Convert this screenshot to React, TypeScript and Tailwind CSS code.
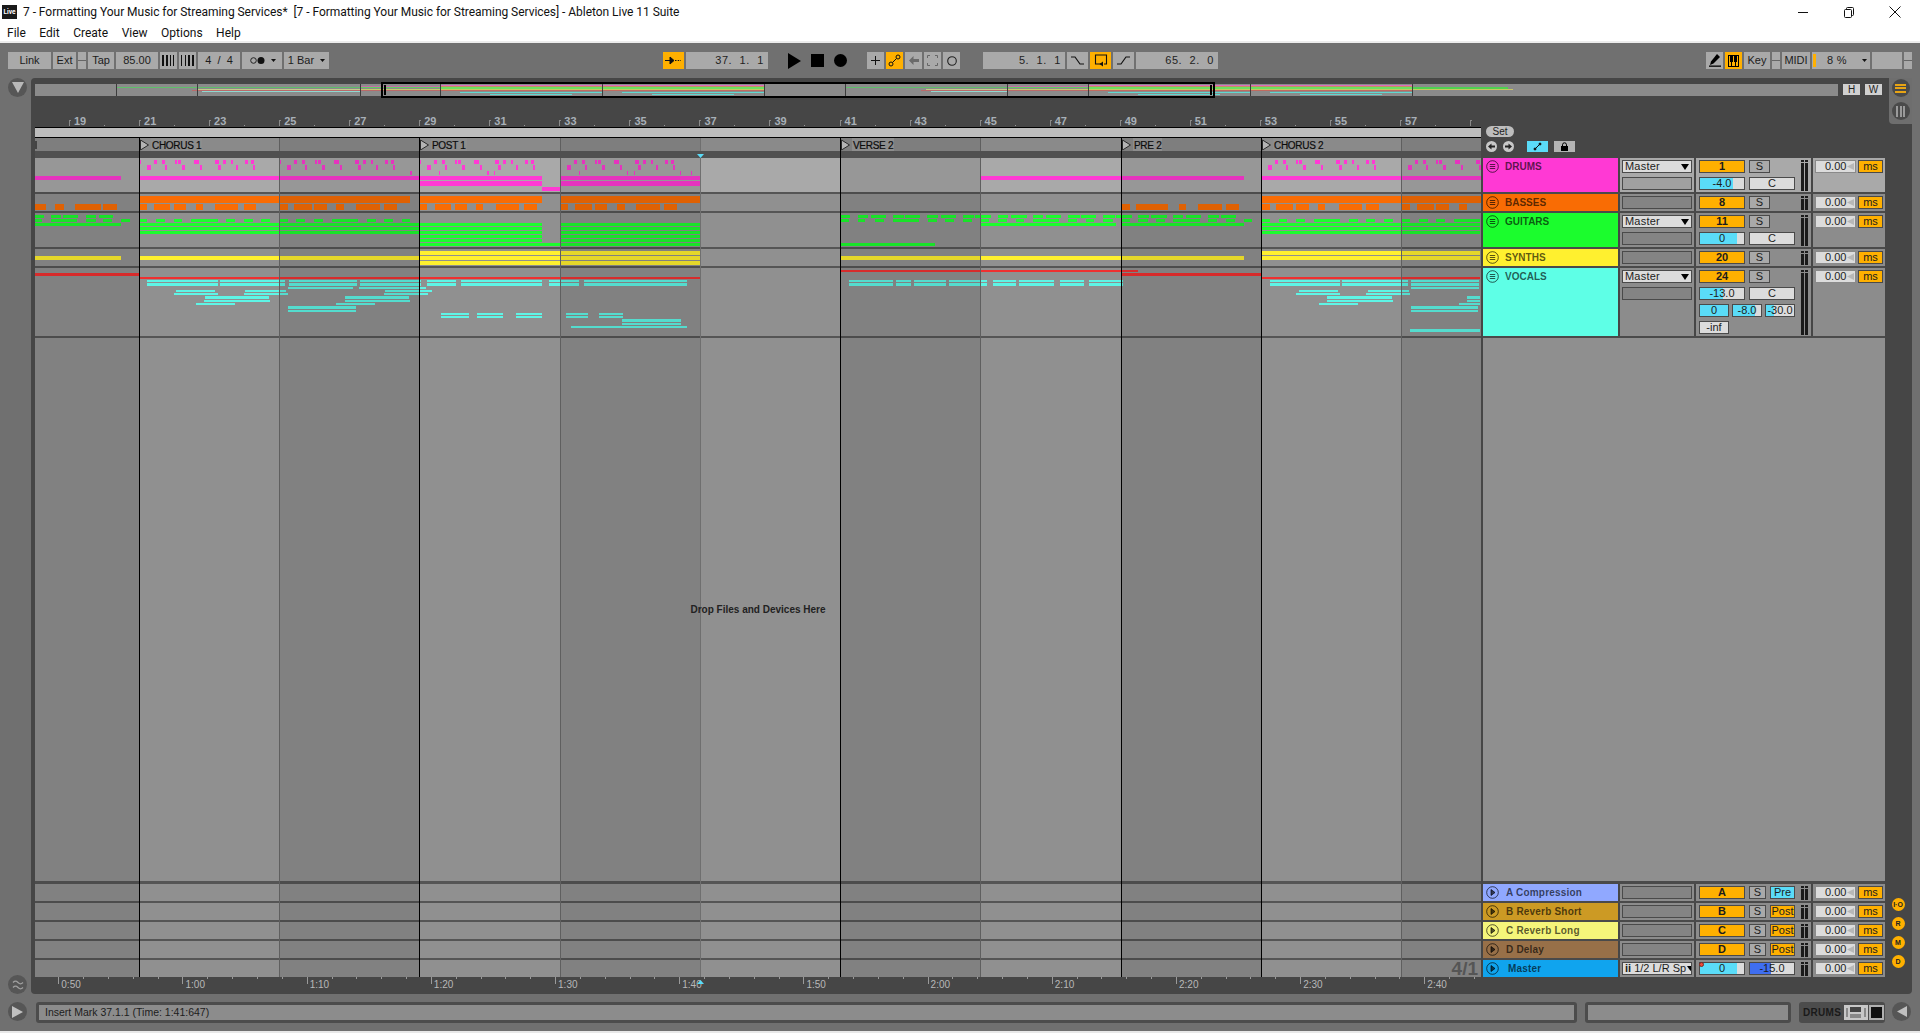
import type { ReactNode } from "react";

type Span = [number, number];
type Rect = { x: number; w: number; y: number; h: number; fill: string };

const PINK = "#ff39d4";
const ORANGE = "#f96c04";
const GREEN = "#1bfd2d";
const YELLOW = "#fff02f";
const RED = "#f03030";
const TEAL = "#5ef5e6";

// spans were read off two crops, so each half has its own scale
const band = (fill: string, y1: number, y2: number, left: Span[], right: Span[] = []): Rect[] => [
  ...left.map(([a, b]) => ({ x: a / 2.178, w: (b - a) / 2.178, y: y1, h: y2 - y1, fill })),
  ...right.map(([a, b]) => ({ x: 720 + a / 2.063, w: (b - a) / 2.063, y: y1, h: y2 - y1, fill })),
];

const repeat = (fill: string, y1: number, y2: number, offsets: Span[], starts: number[]): Rect[] =>
  starts.flatMap((s) => offsets.map(([o, w]) => ({ x: s + o, w, y: y1, h: y2 - y1, fill })));

const px = (fill: string, y1: number, y2: number, spans: Span[]): Rect[] =>
  spans.map(([a, b]) => ({ x: a, w: b - a, y: y1, h: y2 - y1, fill }));

const drumStarts = [140, 280, 420, 560, 1261, 1401];

const drumClips: Rect[] = [
  ...repeat(PINK, 160, 164, [[0, 1], [14, 3], [22, 3], [34.5, 2], [38, 2.5], [53.5, 5], [75, 3.5], [83, 3], [91, 2], [104.5, 3], [110.5, 3]], drumStarts),
  ...repeat(PINK, 165, 170, [[7, 3.5], [25, 2], [42, 3], [60, 2], [78, 3], [95.5, 2], [112.5, 2]], drumStarts),
  ...px(PINK, 171, 175, [[410, 412], [439, 440], [487, 489], [494, 495], [579, 580], [627, 628], [634, 635], [680, 681], [691, 692]]),
  ...px(PINK, 176, 180, [[35, 121], [140, 542], [560, 700], [980, 1244], [1261, 1481]]),
  ...px(PINK, 181, 186, [[420, 542], [560, 700]]),
  ...px(PINK, 187, 191, [[542, 560]]),
  ...px("#5adcf8", 158, 191, [[700, 701]]),
];

const bassClips: Rect[] = [
  ...px(ORANGE, 196, 203, [[140, 410], [420, 542], [560, 700], [1261, 1481]]),
  ...band(ORANGE, 204, 210,
    [[76, 100], [120, 140], [163, 219], [224, 254], [305, 320], [335, 371], [379, 405], [427, 443], [468, 519], [531, 557], [609, 628], [640, 680], [684, 712], [731, 749], [776, 828], [836, 865], [915, 931], [948, 983], [990, 1017], [1037, 1053], [1080, 1131], [1141, 1169], [1221, 1237], [1252, 1289], [1296, 1322], [1343, 1361], [1386, 1437], [1447, 1474]],
    [[829, 845], [858, 925], [946, 961], [986, 1035], [1044, 1071], [1117, 1135], [1148, 1183], [1188, 1215], [1234, 1249], [1276, 1325], [1333, 1360], [1407, 1423], [1438, 1473], [1478, 1503], [1525, 1541]]),
];

const guitarClips: Rect[] = [
  ...band(GREEN, 215, 218,
    [[76, 96], [111, 133], [137, 170], [187, 210], [215, 246]],
    [[250, 268], [285, 305], [312, 342], [357, 379], [382, 413], [427, 450], [456, 487], [501, 523], [527, 559], [574, 594], [600, 633], [645, 666], [673, 704], [717, 742], [745, 776], [790, 814], [817, 850], [862, 885], [889, 922], [935, 955], [961, 992], [1007, 1029], [1034, 1065]]),
  ...band(GREEN, 219, 222,
    [[76, 91], [111, 168], [187, 208], [224, 244], [264, 283], [305, 321], [340, 359], [380, 396], [416, 475], [492, 512], [531, 551], [568, 588], [609, 627], [645, 664], [684, 703], [723, 780], [799, 818], [836, 856], [875, 893]],
    [[250, 266], [285, 300], [320, 338], [357, 411], [429, 447], [465, 483], [501, 520], [537, 555], [574, 592], [611, 628], [646, 700], [718, 737], [755, 772], [790, 810], [829, 846], [862, 882], [900, 918], [935, 990], [1007, 1026], [1043, 1062], [1081, 1098], [1117, 1135], [1153, 1170], [1188, 1207], [1226, 1279], [1298, 1316], [1333, 1351], [1370, 1389], [1407, 1424], [1442, 1461], [1478, 1496], [1514, 1568]]),
  ...band(GREEN, 223, 226, [[76, 264], [305, 1180], [1221, 1524]], [[537, 817], [829, 1081], [1117, 1568]]),
  ...band(GREEN, 227, 230, [[305, 1180], [1221, 1524]], [[1117, 1568]]),
  ...band(GREEN, 231, 234, [[305, 1180], [1221, 1524]], [[1117, 1568]]),
  ...band(GREEN, 235, 238, [[915, 1180], [1221, 1524]]),
  ...band(GREEN, 239, 242, [[915, 1180], [1221, 1524]]),
  ...band(GREEN, 243, 246, [[915, 1524]], [[250, 444]]),
];

const synthClips: Rect[] = [
  ...band(YELLOW, 251, 255, [[915, 1524]], [[1117, 1568]]),
  ...band(YELLOW, 256, 260, [[76, 264], [305, 1524]], [[250, 1081], [1117, 1568]]),
  ...band(YELLOW, 261, 265, [[915, 1524]]),
];

const vocalPhrases: Span[] = [[320, 475], [479, 621], [629, 777], [784, 916], [930, 994], [1004, 1180], [1196, 1261], [1272, 1496]];
const vocalPhrasesRight: Span[] = [[266, 357], [363, 394], [400, 466], [472, 551], [563, 611], [617, 689], [701, 751], [761, 831], [1135, 1279], [1283, 1419], [1426, 1566]];
const harmonyShort: Span[] = [[960, 1022], [1039, 1095], [1124, 1180], [1233, 1281], [1304, 1357]];

const vocalClips: Rect[] = [
  ...band(RED, 270, 272, [], [[250, 862]]),
  ...band(RED, 273, 276, [[76, 304]], [[829, 1117]]),
  ...band(RED, 277, 279, [[305, 1524]], [[1117, 1568]]),
  ...band(TEAL, 280, 282, vocalPhrases, vocalPhrasesRight),
  ...band(TEAL, 283, 286, vocalPhrases, vocalPhrasesRight),
  ...band(TEAL, 287, 289, [[627, 769], [782, 928]], [[1426, 1566]]),
  ...band(TEAL, 290, 292, [[383, 468], [534, 623], [838, 941]], [[1195, 1275], [1337, 1422]]),
  ...band(TEAL, 293, 295, [[380, 475], [531, 627], [836, 932]], [[1188, 1279], [1333, 1424]]),
  ...band(TEAL, 296, 299, [[446, 586], [751, 891]], [[1252, 1386], [1541, 1568]]),
  ...band(TEAL, 300, 302, [[444, 588], [751, 893]], [[1252, 1389], [1541, 1568]]),
  ...band(TEAL, 303, 305, [[427, 512], [732, 817]], [[1236, 1316], [1525, 1568]]),
  ...band(TEAL, 306, 309, [[627, 775]], [[1426, 1564]]),
  ...band(TEAL, 310, 312, [[627, 775]], [[1426, 1564]]),
  ...band(TEAL, 313, 315, harmonyShort),
  ...band(TEAL, 316, 318, harmonyShort),
  ...band(TEAL, 319, 322, [[1355, 1483]]),
  ...band(TEAL, 323, 325, [[1355, 1483]]),
  ...band(TEAL, 326, 328, [[1244, 1496]]),
  ...band(TEAL, 329, 332, [], [[1424, 1568]]),
];

function Clips({ top, h, rects }: { top: number; h: number; rects: Rect[] }) {
  return (
    <svg width={1446} height={h} viewBox={`35 ${top} 1446 ${h}`} shapeRendering="crispEdges" className="block">
      {rects.map((r, i) => (
        <rect key={i} x={r.x} y={r.y} width={r.w} height={r.h} fill={r.fill} />
      ))}
    </svg>
  );
}

// 4 bar stretches of the grid
const sections = [
  { dark: true, line: "" },
  { dark: false, line: "border-l border-black" },
  { dark: true, line: "border-l border-[#5f5f5f]" },
  { dark: false, line: "border-l border-black" },
  { dark: true, line: "border-l border-[#5f5f5f]" },
  { dark: false, line: "border-l border-[#6f6f6f]" },
  { dark: true, line: "border-l border-black" },
  { dark: false, line: "border-l border-[#5f5f5f]" },
  { dark: true, line: "border-l border-black" },
  { dark: false, line: "border-l border-black" },
  { dark: true, line: "border-l border-[#5f5f5f]" },
];
const gridCols = "grid grid-cols-[104px_140px_140px_141px_140px_140px_140px_141px_140px_140px_80px]";

const locators: Record<number, string> = {
  1: "CHORUS 1",
  3: "POST 1",
  6: "VERSE 2",
  8: "PRE 2",
  9: "CHORUS 2",
};

function Btn({ className = "w-[17px]", children }: { className?: string; children?: ReactNode }) {
  return (
    <div className={`h-[17px] bg-[#a9a9a9] flex items-center justify-center text-[11px] text-[#1c1c1c] shrink-0 ${className}`}>
      {children}
    </div>
  );
}

function TimeField({ children }: { children: string }) {
  return (
    <div className="h-[17px] w-[82px] shrink-0 bg-[#a9a9a9] flex items-center justify-end pr-[4px] whitespace-pre tracking-[0.6px] text-[11px] text-[#222]">
      {children}
    </div>
  );
}

function Ico({ children, w = 15, h = 13 }: { children: ReactNode; w?: number; h?: number }) {
  return (
    <svg width={w} height={h} viewBox={`0 0 ${w} ${h}`} fill="none" stroke="#111" strokeWidth="1">
      {children}
    </svg>
  );
}

function Toolbar() {
  return (
    <div className="h-[35px] shrink-0 flex pt-[9px] pl-[8px] gap-[2px]">
      <Btn className="w-[43px]">Link</Btn>
      <Btn className="w-[23px]">Ext</Btn>
      <Btn className="w-[8px]"><div className="w-full h-px bg-[#666]" /></Btn>
      <Btn className="w-[26px]">Tap</Btn>
      <Btn className="w-[42px]">85.00</Btn>
      <Btn>
        <svg width="13" height="11" viewBox="0 0 13 11" fill="#111" shapeRendering="crispEdges">
          <rect x="0" width="2" height="11" /><rect x="3.5" width="2" height="11" /><rect x="7.5" width="1" height="11" /><rect x="11" width="1" height="11" />
        </svg>
      </Btn>
      <Btn>
        <svg width="13" height="11" viewBox="0 0 13 11" fill="#111" shapeRendering="crispEdges">
          <rect x="0" width="1" height="11" /><rect x="3.5" width="1" height="11" /><rect x="7" width="2" height="11" /><rect x="11" width="2" height="11" />
        </svg>
      </Btn>
      <Btn className="w-[42px] whitespace-pre">{"4  /  4"}</Btn>
      <Btn className="w-[40px] pl-[2px]">
        <svg width="15" height="9" viewBox="0 0 15 9">
          <circle cx="3.5" cy="4.5" r="2.8" fill="none" stroke="#222" />
          <circle cx="11" cy="4.5" r="3.5" fill="#111" />
        </svg>
        <svg className="ml-[6px]" width="5" height="3" viewBox="0 0 5 3" fill="#111"><path d="M0 0h5L2.5 3z" /></svg>
      </Btn>
      <Btn className="w-[45px] gap-[6px] text-[10.5px]">
        1 Bar
        <svg width="5" height="3" viewBox="0 0 5 3" fill="#111"><path d="M0 0h5L2.5 3z" /></svg>
      </Btn>

      <Btn className="w-[21px] ml-[332px] bg-[#ffb000]">
        <Ico w={17} h={9}>
          <path d="M0 4.5h5" /><path d="M5 1l4 3.5-4 3.5z" fill="#111" /><path d="M10 4.5h6" strokeDasharray="1.5 1.2" />
        </Ico>
      </Btn>
      <TimeField>{"37.  1.  1"}</TimeField>
      <div className="ml-[18px] w-[13px] h-[17px] flex items-center">
        <svg width="13" height="16" viewBox="0 0 13 16" fill="#000"><path d="M0 0l13 8L0 16z" /></svg>
      </div>
      <div className="ml-[8px] w-[13px] h-[13px] mt-[2px] bg-black" />
      <div className="ml-[8px] w-[13px] h-[13px] mt-[2px] bg-black rounded-full" />
      <Btn className="w-[17px] ml-[18px]">
        <Ico w={11} h={11}><path d="M5.5 1v9M1 5.5h9" /></Ico>
      </Btn>
      <Btn className="w-[17px] bg-[#ffb000]">
        <Ico w={13} h={13}>
          <circle cx="3" cy="10" r="2" /><circle cx="10" cy="3" r="2" /><path d="M4.5 8.5l4-4" />
        </Ico>
      </Btn>
      <Btn className="w-[17px]">
        <svg width="10" height="9" viewBox="0 0 10 9" fill="#6a6a6a"><path d="M0 4.5L4.5 0v3H10v3H4.5v3z" /></svg>
      </Btn>
      <Btn className="w-[17px]">
        <svg width="11" height="11" viewBox="0 0 11 11" fill="none" stroke="#666"><path d="M.5 3V.5H3M8 .5h2.5V3M10.5 8v2.5H8M3 10.5H.5V8" /></svg>
      </Btn>
      <Btn className="w-[17px]">
        <Ico w={12} h={12}><circle cx="6" cy="6" r="4.3" stroke="#222" strokeWidth="1.1" /></Ico>
      </Btn>
      <div className="w-[19px]" />
      <TimeField>{"5.  1.  1"}</TimeField>
      <Btn className="w-[21px]">
        <Ico w={13} h={9}><path d="M0 1h4l5 7h4" strokeWidth="1.2" /></Ico>
      </Btn>
      <Btn className="w-[21px] bg-[#ffb000]">
        <svg width="14" height="13" viewBox="0 0 14 13" fill="none" stroke="#111" strokeWidth="1.1">
          <path d="M7 10H1.5V1h11v9H10" /><path d="M9 7.5v5L5.5 10z" fill="#111" stroke="none" />
        </svg>
      </Btn>
      <Btn className="w-[21px]">
        <Ico w={13} h={9}><path d="M0 8h4l5-7h4" strokeWidth="1.2" /></Ico>
      </Btn>
      <TimeField>{"65.  2.  0"}</TimeField>

      <Btn className="w-[17px] ml-[486px]">
        <svg width="12" height="13" viewBox="0 0 12 13" fill="#000">
          <path d="M8 0l3 3-6.5 6.5L1 11l1-3.5z" /><rect x="0" y="11.5" width="12" height="1.3" />
        </svg>
      </Btn>
      <Btn className="w-[17px] bg-[#ffb000]">
        <svg width="11" height="12" viewBox="0 0 11 12" fill="#000" shapeRendering="crispEdges">
          <path d="M0 0h11v12H0zM1 1v10h2V7H2V1zM4 7v4h3V7H6V1H5v6zM8 7v4h2V1H9v6z" fillRule="evenodd" />
        </svg>
      </Btn>
      <Btn className="w-[26px]">Key</Btn>
      <Btn className="w-[8px]"><div className="w-full h-px bg-[#666]" /></Btn>
      <Btn className="w-[28px]">MIDI</Btn>
      <div className="relative h-[17px] w-[58px] shrink-0 bg-[#a9a9a9] flex items-center pl-[15px] text-[11px] text-[#1c1c1c]">
        <div className="absolute left-[1px] top-[2px] w-[3px] h-[13px] bg-[#ffb000]" />
        <span className="tracking-[0.3px]">8 %</span>
        <svg className="ml-[15px]" width="5" height="3" viewBox="0 0 5 3" fill="#111"><path d="M0 0h5L2.5 3z" /></svg>
      </div>
      <Btn className="w-[30px]" />
      <Btn className="w-[8px]"><div className="w-full h-px bg-[#666]" /></Btn>
    </div>
  );
}

function OverviewDrawing() {
  const sparse = (s: number, e: number): Rect[] => [
    ...px("#5fbf6a", 3, 4, [[s, e]]),
    ...px("#c9c98a", 5, 6, [[s + 81, e]]),
    ...px("#b96a6a", 6, 7, [[s + 76, e]]),
    ...px("#8fd8d0", 7, 8, [[s + 86, e]]),
  ];
  const build = (s: number, e: number): Rect[] => [
    ...px("#c86aa8", 2, 3, [[s, e]]),
    ...px("#5fd060", 3, 4, [[s, e]]),
    ...px("#c8c86a", 5, 6, [[s, e]]),
    ...px("#b96a6a", 6, 7, [[s, e]]),
  ];
  const full = (s: number, e: number): Rect[] => [
    ...px("#dc6cc0", 1, 2, [[s, e]]),
    ...px("#c49060", 2, 3, [[s, e]]),
    ...px("#6ce060", 3, 5, [[s, e]]),
    ...px("#c8c860", 5, 6, [[s, e]]),
    ...px("#c06a60", 6, 7, [[s, e]]),
    ...px("#60d8d0", 8, 9, [[s + 20, e]]),
    ...px("#60d8d0", 10, 11, [[s + 50, e - 30]]),
  ];
  const o = 35;
  const rects = [
    ...sparse(116 - o, 360 - o),
    ...build(360 - o, 440 - o),
    ...full(440 - o, 602 - o),
    ...full(602 - o, 764 - o),
    ...sparse(845 - o, 1007 - o),
    ...build(1007 - o, 1088 - o),
    ...full(1088 - o, 1250 - o),
    ...full(1250 - o, 1412 - o),
    ...px("#50d050", 3, 5, [[1412 - o, 1508 - o]]),
    ...px("#c8c860", 5, 6, [[1412 - o, 1513 - o]]),
  ];
  const lines = [116, 197, 360, 440, 602, 764, 845, 1007, 1088, 1250, 1412];
  return (
    <svg width={1803} height={12} viewBox="0 0 1803 12" shapeRendering="crispEdges" className="block">
      {rects.map((r, i) => (
        <rect key={i} x={r.x} y={r.y} width={r.w} height={r.h} fill={r.fill} />
      ))}
      {lines.map((x) => (
        <rect key={x} x={x - o} y={0} width={1} height={12} fill="#3c3c3c" />
      ))}
    </svg>
  );
}

function OverviewRow() {
  return (
    <div className="h-[19px] shrink-0 flex pt-[6px] pl-[4px]">
      <div className="relative w-[1803px] h-[12px] bg-[#8b8b8b]">
        <OverviewDrawing />
        <div className="absolute left-[346px] top-[-2px] w-[834px] h-[16px] border-2 border-black">
          <div className="absolute left-[1px] top-[1px] w-[2px] h-[10px] bg-black" />
          <div className="absolute right-[1px] top-[1px] w-[2px] h-[10px] bg-black" />
        </div>
      </div>
      <div className="ml-[5px] w-[17px] h-[11px] bg-[#d0d0d0] text-[10px] leading-[11px] text-center text-[#222]">H</div>
      <div className="ml-[5px] w-[17px] h-[11px] bg-[#d0d0d0] text-[10px] leading-[11px] text-center text-[#222]">W</div>
    </div>
  );
}

function BarRuler() {
  const bars = Array.from({ length: 20 }, (_, i) => 19 + i * 2);
  return (
    <div className="h-[30px] shrink-0 flex items-end pl-[34px] overflow-hidden">
      {[...bars, 0].map((n) => (
        <div key={n} className="w-[70.06px] h-[12px] shrink-0 flex items-start">
          <div className="w-[2px] h-[6px] mt-[5px] border-l border-t border-[#8a8a8a]" />
          <span className="w-[30px] ml-[3px] mt-[2px] text-[11px] font-bold leading-[8px] text-[#a8b0b8]">{n > 0 ? n : ""}</span>
          <div className="w-px h-[1px] mt-[10px] bg-[#9a9a9a]" />
        </div>
      ))}
    </div>
  );
}

function LocatorRow() {
  return (
    <div className={`${gridCols} h-[20px] shrink-0`}>
      {sections.map((s, i) => {
        const black = s.line.includes("black");
        return (
          <div key={i} className={`flex flex-col ${black ? "border-l border-black" : ""}`}>
            <div className={`relative h-[13px] flex items-center ${s.dark ? "bg-[#7e7e7e]" : "bg-[#8a8a8a]"} ${!black ? s.line : ""}`}>
              {i === 0 && <div className="w-[2px] h-[8px] bg-[#444]" />}
              {locators[i] && (
                <>
                  <svg width="10" height="12" viewBox="0 0 10 12" className="shrink-0 mt-[1px]">
                    <path d="M.5 1l8 5-8 5z" fill="#b4b4b4" stroke="#2a2a2a" />
                  </svg>
                  <span className="ml-[1px] px-[1px] pt-[2px] bg-[#8d8d8d] text-[10px] leading-[11px] tracking-[-0.3px] text-[#0c0c0c] [-webkit-text-stroke:0.2px_#0c0c0c]">
                    {locators[i]}
                  </span>
                </>
              )}
            </div>
            <div className="h-[7px] bg-[#505050] flex items-end">
              {i === 5 && (
                <svg width="7" height="4" viewBox="0 0 7 4" className="-ml-[3px]">
                  <path d="M0 0h7L3.5 4z" fill="#5adcf8" />
                </svg>
              )}
            </div>
          </div>
        );
      })}
    </div>
  );
}

function GridOverlay() {
  return (
    <div className={`${gridCols} absolute inset-0 pointer-events-none`}>
      {sections.map((s, i) => (
        <div key={i} className={`${s.line} ${s.dark ? "bg-black/10" : ""}`} />
      ))}
    </div>
  );
}

function TimeRuler() {
  const labels = ["0:50", "1:00", "1:10", "1:20", "1:30", "1:40", "1:50", "2:00", "2:10", "2:20", "2:30", "2:40"];
  return (
    <div className="h-[17px] shrink-0 flex pl-[23.3px] overflow-hidden relative">
      {labels.map((l) => (
        <div key={l} className="w-[124.2px] shrink-0">
          <div className="flex h-[2px]">
            {[0, 1, 2, 3, 4].map((t) => (
              <div key={t} className="w-[24.84px] border-l border-[#9a9a9a]" />
            ))}
          </div>
          <div className="border-l border-[#9a9a9a] h-[5px] relative">
            <span className="absolute left-[2px] top-[-0.5px] text-[10px] leading-[12px] text-[#b8b8b8]">{l}</span>
          </div>
        </div>
      ))}
      <svg width="7" height="4" viewBox="0 0 7 4" className="absolute left-[661.5px] top-[3px]">
        <path d="M0 4h7L3.5 0z" fill="#5adcf8" />
      </svg>
    </div>
  );
}

function Arrangement() {
  return (
    <div className="w-[1446px] ml-[4px] shrink-0 flex flex-col">
      <BarRuler />
      <div className="h-[11px] shrink-0 bg-[#bdbdbd] border-y border-black" />
      <LocatorRow />
      <div className="relative flex-1 flex flex-col min-h-0 overflow-hidden">
        <div className="h-[36px] shrink-0 border-b-2 border-[#555] bg-[#a9a9a9]"><Clips top={158} h={34} rects={drumClips} /></div>
        <div className="h-[19px] shrink-0 border-b-2 border-[#555] bg-[#909090]"><Clips top={194} h={17} rects={bassClips} /></div>
        <div className="h-[36px] shrink-0 border-b-2 border-[#555] bg-[#909090]"><Clips top={213} h={34} rects={guitarClips} /></div>
        <div className="h-[19px] shrink-0 border-b-2 border-[#555] bg-[#909090]"><Clips top={249} h={17} rects={synthClips} /></div>
        <div className="h-[70px] shrink-0 border-b-2 border-[#555] bg-[#909090]"><Clips top={268} h={68} rects={vocalClips} /></div>
        <div className="flex-1 border-b-[3px] border-[#555] bg-[#909090] flex items-center justify-center">
          <span className="relative z-10 text-[10px] font-bold text-[#222]">Drop Files and Devices Here</span>
        </div>
        <div className="h-[19px] shrink-0 border-b-2 border-[#555] bg-[#909090]" />
        <div className="h-[19px] shrink-0 border-b-2 border-[#555] bg-[#909090]" />
        <div className="h-[19px] shrink-0 border-b-2 border-[#555] bg-[#909090]" />
        <div className="h-[19px] shrink-0 border-b-2 border-[#555] bg-[#909090]" />
        <div className="h-[17px] shrink-0 bg-[#909090] flex justify-end items-center pr-[3px]">
          <span className="relative z-10 text-[19px] font-bold leading-[17px] text-[#555]">4/1</span>
        </div>
        <GridOverlay />
      </div>
      <TimeRuler />
    </div>
  );
}

function MenuIcon() {
  return (
    <svg width="13" height="13" viewBox="0 0 13 13" fill="none" stroke="currentColor" strokeWidth="1" className="shrink-0">
      <circle cx="6.5" cy="6.5" r="5.8" />
      <path d="M3.8 4.5h5.4M3.8 6.5h5.4M3.8 8.5h5.4" />
    </svg>
  );
}

function PlayIcon() {
  return (
    <svg width="13" height="13" viewBox="0 0 13 13" fill="none" stroke="currentColor" strokeWidth="1" className="shrink-0">
      <circle cx="6.5" cy="6.5" r="5.8" />
      <path d="M5 3.5l4 3-4 3z" fill="currentColor" />
    </svg>
  );
}

const boxBase = "h-[13px] border border-[#4a4a4a] flex items-center text-[11px] leading-none text-[#1c1c1c] shrink-0";
const boxCenter = `${boxBase} justify-center`;

function Val({ text, fill = 0, w = "w-[46px]", color = "#5adcf8" }: { text: string; fill?: number; w?: string; color?: string }) {
  return (
    <div
      className={`${boxCenter} ${w}`}
      style={{ background: `linear-gradient(to right, ${color} ${fill}%, #dcdcdc ${fill}%)` }}
    >
      {text}
    </div>
  );
}

function Activator({ label }: { label: string }) {
  return <div className={`${boxCenter} w-[46px] bg-[#ffb000] font-bold`}>{label}</div>;
}

function Solo({ w = "w-[21px]" }: { w?: string }) {
  return <div className={`${boxCenter} ${w} bg-[#a9a9a9]`}>S</div>;
}

function Send({ label, on }: { label: string; on?: boolean }) {
  return <div className={`${boxCenter} w-[25px] ${on ? "bg-[#5adcf8]" : "bg-[#ffb000]"}`}>{label}</div>;
}

function Routing() {
  return (
    <div className={`${boxBase} w-[70px] bg-[#dcdcdc] justify-between px-[2px] tracking-[0.2px]`}>
      Master
      <svg width="8" height="6" viewBox="0 0 8 6" fill="#000"><path d="M0 0h8L4 6z" /></svg>
    </div>
  );
}

function EmptyBox() {
  return <div className={`${boxBase} w-[70px] bg-black/5`} />;
}

function Meter() {
  return (
    <div className="ml-[6px] w-[7px] flex gap-[1px] self-stretch shrink-0">
      {[0, 1].map((m) => (
        <div key={m} className="w-[3px] flex flex-col gap-[1px]">
          <div className="h-[2px] bg-[#1a1a1a]" />
          <div className="flex-1 bg-[#1a1a1a]" />
        </div>
      ))}
    </div>
  );
}

function DelayCol({ bg }: { bg: string }) {
  return (
    <div className={`w-[72px] shrink-0 flex gap-[2px] pl-[2px] pt-[2px] ${bg}`}>
      <div className={`${boxBase} w-[41px] bg-[#dcdcdc] border-[#8a8a8a] pl-[9px]`}>
        0.00
        <svg width="7" height="7" viewBox="0 0 7 7" fill="#b8b8b8" className="ml-[1px]"><path d="M7 0v7L0 3.5z" /></svg>
      </div>
      <div className={`${boxCenter} w-[25px] bg-[#ffb000]`}>ms</div>
    </div>
  );
}

type TrackProps = {
  name: string;
  color: string;
  height: string;
  bg: string;
  icon: ReactNode;
  chain: ReactNode;
  mixer: ReactNode;
  bordered?: boolean;
  nameClass?: string;
};

function TrackRow({ name, color, height, bg, icon, chain, mixer, bordered = true, nameClass = "uppercase" }: TrackProps) {
  return (
    <div className={`flex gap-[2px] shrink-0 ${height} ${bordered ? "border-b-2 border-[#4a4a4a]" : ""}`}>
      <div className={`w-[135px] shrink-0 flex items-start gap-[6px] pl-[3px] pt-[2px] text-black/65 ${color}`}>
        {icon}
        <span className={`text-[10px] font-bold leading-[13px] ${nameClass}`}>{name}</span>
      </div>
      <div className={`w-[74px] shrink-0 flex flex-col gap-[4px] pl-[2px] pt-[2px] ${bg}`}>{chain}</div>
      <div className={`w-[115px] shrink-0 flex pl-[3px] pt-[2px] pb-[1px] ${bg}`}>
        <div className="w-[96px] flex flex-col gap-[4px]">{mixer}</div>
        <Meter />
      </div>
      <DelayCol bg={bg} />
    </div>
  );
}

function Controls() {
  return (
    <div className="h-[61px] shrink-0 pt-[29px] pl-[3px]">
      <div className="w-[28px] h-[11px] rounded-full bg-[#bdbdbd] text-[10px] leading-[11px] text-center text-[#222]">Set</div>
      <div className="flex items-center mt-[4px] h-[11px]">
        <svg width="11" height="11" viewBox="0 0 11 11">
          <circle cx="5.5" cy="5.5" r="5.5" fill="#c8c8c8" />
          <path d="M2 5.5L5.5 2.5v2H9v2H5.5v2z" fill="#222" />
        </svg>
        <svg width="11" height="11" viewBox="0 0 11 11" className="ml-[6px]">
          <circle cx="5.5" cy="5.5" r="5.5" fill="#c8c8c8" />
          <path d="M9 5.5L5.5 2.5v2H2v2h3.5v2z" fill="#222" />
        </svg>
        <div className="ml-[13px] w-[21px] h-[11px] bg-[#5adcf8] flex items-center justify-center">
          <svg width="9" height="9" viewBox="0 0 9 9" fill="#111" stroke="#111">
            <circle cx="2" cy="7" r="1" /><circle cx="7" cy="2" r="1" /><path d="M2 7l5-5" />
          </svg>
        </div>
        <div className="ml-[6px] w-[21px] h-[11px] bg-[#b4b4b4] flex items-center justify-center">
          <svg width="9" height="9" viewBox="0 0 9 9" fill="#000">
            <rect x="1" y="4" width="7" height="5" /><path d="M2.5 4V2.8a2 2 0 0 1 4 0V4" fill="none" stroke="#000" />
          </svg>
        </div>
      </div>
    </div>
  );
}

function ReturnRow({ name, color, letter, pre }: { name: string; color: string; letter: string; pre?: boolean }) {
  return (
    <TrackRow
      name={name}
      color={color}
      height="h-[19px]"
      bg="bg-[#8c8c8c]"
      icon={<PlayIcon />}
      nameClass="ml-[1px] tracking-[0.2px]"
      chain={<EmptyBox />}
      mixer={
        <div className="flex gap-[4px]">
          <Activator label={letter} />
          <Solo w="w-[17px]" />
          <Send label={pre ? "Pre" : "Post"} on={pre} />
        </div>
      }
    />
  );
}

function TrackPanel() {
  const sel = "bg-[#a9a9a9]";
  const off = "bg-[#8c8c8c]";
  return (
    <div className="w-[402px] ml-[2px] shrink-0 flex flex-col pb-[17px]">
      <Controls />
      <TrackRow
        name="Drums"
        color="bg-[#ff39d4]"
        height="h-[36px]"
        bg={sel}
        icon={<MenuIcon />}
        chain={<><Routing /><EmptyBox /></>}
        mixer={
          <>
            <div className="flex gap-[4px]"><Activator label="1" /><Solo /></div>
            <div className="flex gap-[4px]"><Val text="-4.0" fill={74} /><Val text="C" /></div>
          </>
        }
      />
      <TrackRow
        name="Basses"
        color="bg-[#f96c04]"
        height="h-[19px]"
        bg={off}
        icon={<MenuIcon />}
        chain={<EmptyBox />}
        mixer={<div className="flex gap-[4px]"><Activator label="8" /><Solo /></div>}
      />
      <TrackRow
        name="Guitars"
        color="bg-[#1bfd2d]"
        height="h-[36px]"
        bg={off}
        icon={<MenuIcon />}
        chain={<><Routing /><EmptyBox /></>}
        mixer={
          <>
            <div className="flex gap-[4px]"><Activator label="11" /><Solo /></div>
            <div className="flex gap-[4px]"><Val text="0" fill={83} /><Val text="C" /></div>
          </>
        }
      />
      <TrackRow
        name="Synths"
        color="bg-[#fff02f]"
        height="h-[19px]"
        bg={off}
        icon={<MenuIcon />}
        chain={<EmptyBox />}
        mixer={<div className="flex gap-[4px]"><Activator label="20" /><Solo /></div>}
      />
      <TrackRow
        name="Vocals"
        color="bg-[#5effe6]"
        height="h-[70px]"
        bg={off}
        icon={<MenuIcon />}
        chain={<><Routing /><EmptyBox /></>}
        mixer={
          <>
            <div className="flex gap-[4px]"><Activator label="24" /><Solo /></div>
            <div className="flex gap-[4px]"><Val text="-13.0" fill={52} /><Val text="C" /></div>
            <div className="flex gap-[3px]">
              <Val text="0" fill={100} w="w-[30px]" />
              <Val text="-8.0" fill={77} w="w-[30px]" />
              <Val text="-30.0" fill={30} w="w-[30px]" />
            </div>
            <Val text="-inf" w="w-[30px]" />
          </>
        }
      />
      <div className="flex-1 bg-[#8f8f8f] border-b-[3px] border-[#4a4a4a]" />
      <ReturnRow name="A Compression" color="bg-[#90a8ff]" letter="A" pre />
      <ReturnRow name="B Reverb Short" color="bg-[#cc9a24]" letter="B" />
      <ReturnRow name="C Reverb Long" color="bg-[#f5f57a]" letter="C" />
      <ReturnRow name="D Delay" color="bg-[#987048]" letter="D" />
      <TrackRow
        name="Master"
        color="bg-[#10a4ee]"
        height="h-[17px]"
        bg={off}
        bordered={false}
        icon={<PlayIcon />}
        nameClass="ml-[3px] tracking-[0.2px]"
        chain={
          <div className={`${boxBase} w-[70px] bg-[#dcdcdc] pl-[2px] gap-[3px] whitespace-nowrap overflow-hidden`}>
            <span className="font-bold">ii</span>
            <span>1/2 L/R Sp</span>
            <svg width="7" height="5" viewBox="0 0 7 5" fill="#000" className="shrink-0 -ml-[2px]"><path d="M0 0h7L3.5 5z" /></svg>
          </div>
        }
        mixer={
          <div className="flex gap-[4px]">
            <div className="relative">
              <Val text="0" fill={83} />
              <div className="absolute left-0 top-0 w-[5px] h-[5px] rounded-full bg-[#f04a3a] border border-[#7a2a20]" />
            </div>
            <Val text="-15.0" fill={48} color="#3f6ef0" />
          </div>
        }
      />
    </div>
  );
}

function SideColumn() {
  return (
    <div className="w-[23px] shrink-0 flex flex-col ml-auto">
      <div className="h-[46px] shrink-0 bg-[#6e6e6e] rounded-bl-[4px] flex flex-col items-center gap-[5px] pt-[1px]">
        <div className="w-[18px] h-[18px] rounded-full bg-[#4a4a4a] flex flex-col items-center justify-center gap-[1.5px]">
          <div className="w-[11px] h-[2px] bg-[#e8a414]" />
          <div className="w-[11px] h-[2px] bg-[#e8a414]" />
          <div className="w-[11px] h-[2px] bg-[#e8a414]" />
        </div>
        <div className="w-[18px] h-[18px] rounded-full bg-[#4a4a4a] flex items-center justify-center gap-[1.5px]">
          <div className="w-[2px] h-[11px] bg-[#9a9a9a]" />
          <div className="w-[2px] h-[11px] bg-[#9a9a9a]" />
          <div className="w-[2px] h-[11px] bg-[#9a9a9a]" />
        </div>
      </div>
      <div className="flex-1 flex flex-col justify-end items-center gap-[6px] pb-[26.5px] pr-[5px]">
        {["I·O", "R", "M", "D"].map((l) => (
          <div key={l} className="w-[13px] h-[13px] rounded-full bg-[#ffb000] text-[7px] font-bold leading-[13px] text-center text-[#222]">
            {l}
          </div>
        ))}
      </div>
    </div>
  );
}

function RoundIcon({ children }: { children: ReactNode }) {
  return (
    <div className="w-[19px] h-[19px] rounded-full bg-[#565656] flex items-center justify-center">{children}</div>
  );
}

export default function App() {
  return (
    <div className="w-[1920px] h-[1033px] flex flex-col overflow-hidden bg-[#707070] font-['Liberation_Sans',Arial,sans-serif]">
      <div className="h-[41px] shrink-0 bg-white font-['Roboto',sans-serif] text-[#111]">
        <div className="h-[24px] flex items-center">
          <div className="ml-[2px] w-[15px] h-[14px] bg-[#1a1a1a] text-white text-[6.5px] font-bold leading-[14px] text-center">Live</div>
          <span className="ml-[6px] text-[12px] tracking-[-0.04px] whitespace-pre">
            {"7 - Formatting Your Music for Streaming Services*  [7 - Formatting Your Music for Streaming Services] - Ableton Live 11 Suite"}
          </span>
          <div className="ml-auto flex pr-[2px] items-center">
            <div className="w-[46px] flex justify-center">
              <svg width="10" height="1" viewBox="0 0 10 1"><rect width="10" height="1" fill="#111" /></svg>
            </div>
            <div className="w-[46px] flex justify-center">
              <svg width="10" height="11" viewBox="0 0 10 11" fill="none" stroke="#111">
                <rect x=".5" y="2.5" width="7" height="8" rx="1" /><path d="M2.5 2.5V1.5a1 1 0 0 1 1-1h5a1 1 0 0 1 1 1v6a1 1 0 0 1-1 1h-1" />
              </svg>
            </div>
            <div className="w-[46px] flex justify-center">
              <svg width="12" height="12" viewBox="0 0 12 12" stroke="#111"><path d="M.5.5l11 11M11.5.5l-11 11" /></svg>
            </div>
          </div>
        </div>
        <div className="h-[17px] flex items-center gap-[13.5px] pl-[7px] text-[12px]">
          {["File", "Edit", "Create", "View", "Options", "Help"].map((m) => (
            <span key={m}>{m}</span>
          ))}
        </div>
      </div>
      <div className="h-[2px] shrink-0 bg-[#ececec]" />

      <Toolbar />

      <div className="h-[916px] shrink-0 flex">
        <div className="w-[31px] shrink-0 flex flex-col justify-between items-center pl-[4px]">
          <RoundIcon>
            <svg width="12" height="11" viewBox="0 0 12 11" fill="#b8b8b8"><path d="M0 0h12L6 11z" /></svg>
          </RoundIcon>
          <RoundIcon>
            <svg width="12" height="12" viewBox="0 0 12 12" fill="none" stroke="#a0a0a0" strokeWidth="1.3">
              <path d="M1 3.5c2-2 3-2 5 0s3 2 5 0M1 8.5c2-2 3-2 5 0s3 2 5 0" />
            </svg>
          </RoundIcon>
        </div>
        <div className="w-[1881px] shrink-0 bg-[#464646] rounded-l-[4px] rounded-br-[4px] flex">
          <div className="w-[1858px] shrink-0 flex flex-col">
            <OverviewRow />
            <div className="flex-1 flex min-h-0">
              <Arrangement />
              <TrackPanel />
            </div>
          </div>
          <SideColumn />
        </div>
      </div>

      <div className="h-[37px] shrink-0 flex items-start pt-[8px]">
        <div className="w-[31px] shrink-0 flex justify-center pl-[4px]">
          <RoundIcon>
            <svg width="11" height="12" viewBox="0 0 11 12" fill="#c0c0c0"><path d="M0 0l11 6L0 12z" /></svg>
          </RoundIcon>
        </div>
        <div className="ml-[5px] w-[1541px] h-[21px] border-[3px] border-[#4c4c4c] rounded-[3px] bg-[#8c8c8c] flex items-center pl-[6px] text-[10.5px] text-[#1c1c1c]">
          Insert Mark 37.1.1 (Time: 1:41:647)
        </div>
        <div className="ml-[8px] w-[206px] h-[21px] border-[3px] border-[#4c4c4c] rounded-[3px] bg-[#8c8c8c]" />
        <div className="ml-[8px] w-[86px] h-[21px] rounded-[3px] bg-[#4c4c4c] flex items-center pl-[4px]">
          <span className="text-[10px] font-bold tracking-[0.3px] text-[#1a1a1a]">DRUMS</span>
          <svg className="ml-[3px]" width="24" height="15" viewBox="0 0 24 15">
            <rect width="24" height="15" fill="#c8c8c8" />
            <rect x="6" y="2" width="11" height="5" fill="#444" />
            <rect x="6" y="9" width="11" height="4" fill="#888" />
            <rect x="2" y="3" width="2" height="9" fill="#8a8a8a" />
            <rect x="20" y="3" width="2" height="9" fill="#8a8a8a" />
          </svg>
          <div className="ml-[1px] w-[15px] h-[15px] bg-[#b0b0b0] flex items-center justify-center">
            <div className="w-[11px] h-[11px] bg-[#111]" />
          </div>
        </div>
        <div className="ml-[7px]">
          <RoundIcon>
            <svg width="10" height="11" viewBox="0 0 10 11" fill="#c0c0c0"><path d="M10 0L0 5.5 10 11z" /></svg>
          </RoundIcon>
        </div>
      </div>
      <div className="h-[2px] shrink-0 bg-[#e8e8e8]" />
    </div>
  );
}
